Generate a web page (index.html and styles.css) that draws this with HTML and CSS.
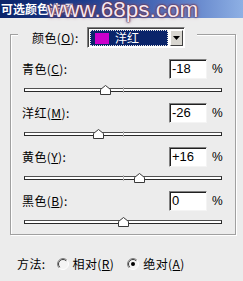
FILE: index.html
```html
<!DOCTYPE html>
<html>
<head>
<meta charset="utf-8">
<link rel="stylesheet" href="styles.css">
</head>
<body>
<div class="window">
  <div class="titlebar">
    <span class="title">可选颜色选项</span>
    <span class="watermark">www.68ps.com</span>
  </div>
  <div class="content">
    <div class="group">
      <div class="group-head">
        <span class="label head-label">颜色(<u>O</u>):</span>
        <div class="combo">
          <div class="combo-value"><span class="swatch"></span><span class="combo-text">洋红</span></div>
          <div class="combo-btn"><svg width="7" height="4" viewBox="0 0 7 4"><polygon points="0,0 7,0 3.5,4" fill="#000"/></svg></div>
        </div>
      </div>

      <div class="row">
        <div class="field"><span class="label">青色(<u>C</u>):</span><span class="input">-18</span><span class="pct">%</span></div>
        <div class="slider"><div class="track"><span class="tick"></span><svg class="thumb" style="left:41%" width="11" height="10" viewBox="0 0 11 10"><polygon points="0.5,4.5 5.5,0.5 10.5,4.5 10.5,9.5 0.5,9.5" fill="#fff" stroke="#3a3a3a"/></svg></div></div>
      </div>
      <div class="row">
        <div class="field"><span class="label">洋红(<u>M</u>):</span><span class="input">-26</span><span class="pct">%</span></div>
        <div class="slider"><div class="track"><span class="tick"></span><svg class="thumb" style="left:37%" width="11" height="10" viewBox="0 0 11 10"><polygon points="0.5,4.5 5.5,0.5 10.5,4.5 10.5,9.5 0.5,9.5" fill="#fff" stroke="#3a3a3a"/></svg></div></div>
      </div>
      <div class="row">
        <div class="field"><span class="label">黄色(<u>Y</u>):</span><span class="input">+16</span><span class="pct">%</span></div>
        <div class="slider"><div class="track"><span class="tick"></span><svg class="thumb" style="left:58%" width="11" height="10" viewBox="0 0 11 10"><polygon points="0.5,4.5 5.5,0.5 10.5,4.5 10.5,9.5 0.5,9.5" fill="#fff" stroke="#3a3a3a"/></svg></div></div>
      </div>
      <div class="row">
        <div class="field"><span class="label">黑色(<u>B</u>):</span><span class="input">0</span><span class="pct">%</span></div>
        <div class="slider"><div class="track"><span class="tick"></span><svg class="thumb" style="left:50%" width="11" height="10" viewBox="0 0 11 10"><polygon points="0.5,4.5 5.5,0.5 10.5,4.5 10.5,9.5 0.5,9.5" fill="#fff" stroke="#3a3a3a"/></svg></div></div>
      </div>
    </div>

    <div class="method">
      <span class="label">方法:</span>
      <span class="radio">
        <svg width="12" height="12" viewBox="0 0 12 12"><circle cx="6" cy="6" r="5.5" fill="#f4f4f4" stroke="#ffffff"/><path d="M2.1 9.9 A5.5 5.5 0 0 1 9.9 2.1" fill="none" stroke="#808080"/><path d="M2.8 9.2 A4.5 4.5 0 0 1 9.2 2.8" fill="none" stroke="#404040"/></svg>
        <span class="label">相对(<u>R</u>)</span>
      </span>
      <span class="radio">
        <svg width="12" height="12" viewBox="0 0 12 12"><circle cx="6" cy="6" r="5.5" fill="#f4f4f4" stroke="#ffffff"/><path d="M2.1 9.9 A5.5 5.5 0 0 1 9.9 2.1" fill="none" stroke="#808080"/><path d="M2.8 9.2 A4.5 4.5 0 0 1 9.2 2.8" fill="none" stroke="#404040"/><circle cx="6" cy="6" r="2" fill="#000"/></svg>
        <span class="label">绝对(<u>A</u>)</span>
      </span>
    </div>
  </div>
</div>
</body>
</html>
```

FILE: styles.css
```css
html, body {
  margin: 0;
  padding: 0;
}
body {
  width: 243px;
  height: 281px;
  overflow: hidden;
  background: #ececec;
  font-family: "Noto Sans CJK SC", "Liberation Sans", sans-serif;
  font-size: 12px;
  color: #000;
}
.window {
  width: 243px;
  height: 281px;
}
.titlebar {
  position: relative;
  z-index: 2;
  height: 18px;
  line-height: 18px;
  padding-left: 1px;
  background: linear-gradient(to right, #0a246a 0%, #1e3c8c 35%, #5273c0 70%, #8eb0e4 100%);
}
.title {
  color: #fff;
  font-weight: bold;
  font-size: 12px;
}
.watermark {
  position: absolute;
  left: 47px;
  top: -2px;
  font-family: "Liberation Sans", sans-serif;
  font-size: 22.5px;
  line-height: 24px;
  color: #f6e6f0;
  text-shadow: 0 0 1px #4a1c3c, 0 0 2px #5a2a4c, 0 0 2px #6a3a5a, 0 0 4px #9a6a8a;
  white-space: nowrap;
}
.content {
  padding: 0 7px 0 10px;
}
.group {
  margin-top: 16px;
  border: 1px solid #a0a0a0;
  box-shadow: 1px 1px 0 #fff, inset 1px 1px 0 #fff;
  padding: 0 13px 0 11px;
  height: 199px;
}
.group-head {
  display: flex;
  align-items: center;
  width: max-content;
  margin: -8px 0 0 -4px;
  padding: 0 12px 0 14px;
  background: #ececec;
  height: 21px;
}
.label {
  line-height: 14px;
  letter-spacing: 0.4px;
  white-space: nowrap;
}
.label u {
  text-decoration: underline;
}
.head-label {
  width: 55px;
}
.combo {
  box-sizing: border-box;
  width: 98px;
  height: 21px;
  display: flex;
  border: 1px solid;
  border-color: #808080 #ffffff #ffffff #808080;
  box-shadow: inset 1px 1px 0 #404040;
  background: #fff;
  padding: 2px 1px 1px 2px;
  gap: 2px;
}
.combo-value {
  flex: 1;
  display: flex;
  align-items: center;
  background: #0a246a;
  outline: 1px dotted #e8e8e8;
  outline-offset: -1px;
  padding-left: 5px;
}
.swatch {
  width: 14px;
  height: 11px;
  background: #cc00cc;
  margin-right: 6px;
}
.combo-text {
  color: #fff;
  line-height: 14px;
}
.combo-btn {
  box-sizing: border-box;
  width: 13px;
  display: flex;
  align-items: center;
  justify-content: center;
  background: #d8d6d0;
  border: 1px solid;
  border-color: #ffffff #404040 #404040 #ffffff;
}
.group-head + .row {
  margin-top: 11px;
}
.field {
  height: 20px;
  display: flex;
  align-items: center;
}
.field .label {
  flex: 1;
}
.input {
  box-sizing: border-box;
  width: 38px;
  height: 20px;
  background: #fff;
  border: 1px solid;
  border-color: #808080 #f4f4f4 #f4f4f4 #808080;
  box-shadow: inset 1px 1px 0 #202020;
  font-family: "Liberation Sans", sans-serif;
  font-size: 13px;
  line-height: 18px;
  padding-left: 2px;
  margin-right: 5px;
}
.pct {
  width: 10px;
  font-family: "Liberation Sans", sans-serif;
  font-size: 12px;
  line-height: 14px;
}
.slider {
  height: 24px;
  padding: 9px 0 0 2px;
  box-sizing: border-box;
}
.track {
  position: relative;
  box-sizing: border-box;
  height: 4px;
  background: #fff;
  border: 1px solid #2a2a2a;
  border-top-color: #505050;
}
.tick {
  position: absolute;
  left: 50%;
  top: -2px;
  width: 1px;
  height: 6px;
  background: #b8b8b8;
}
.thumb {
  position: absolute;
  top: -4px;
  margin-left: -5px;
  display: block;
}
.method {
  display: flex;
  align-items: center;
  margin-top: 22px;
  padding-left: 7px;
  height: 14px;
}
.radio {
  display: flex;
  align-items: center;
  gap: 4px;
  margin-left: 11px;
}
.radio + .radio {
  margin-left: 13px;
}
.radio svg {
  display: block;
}
```
